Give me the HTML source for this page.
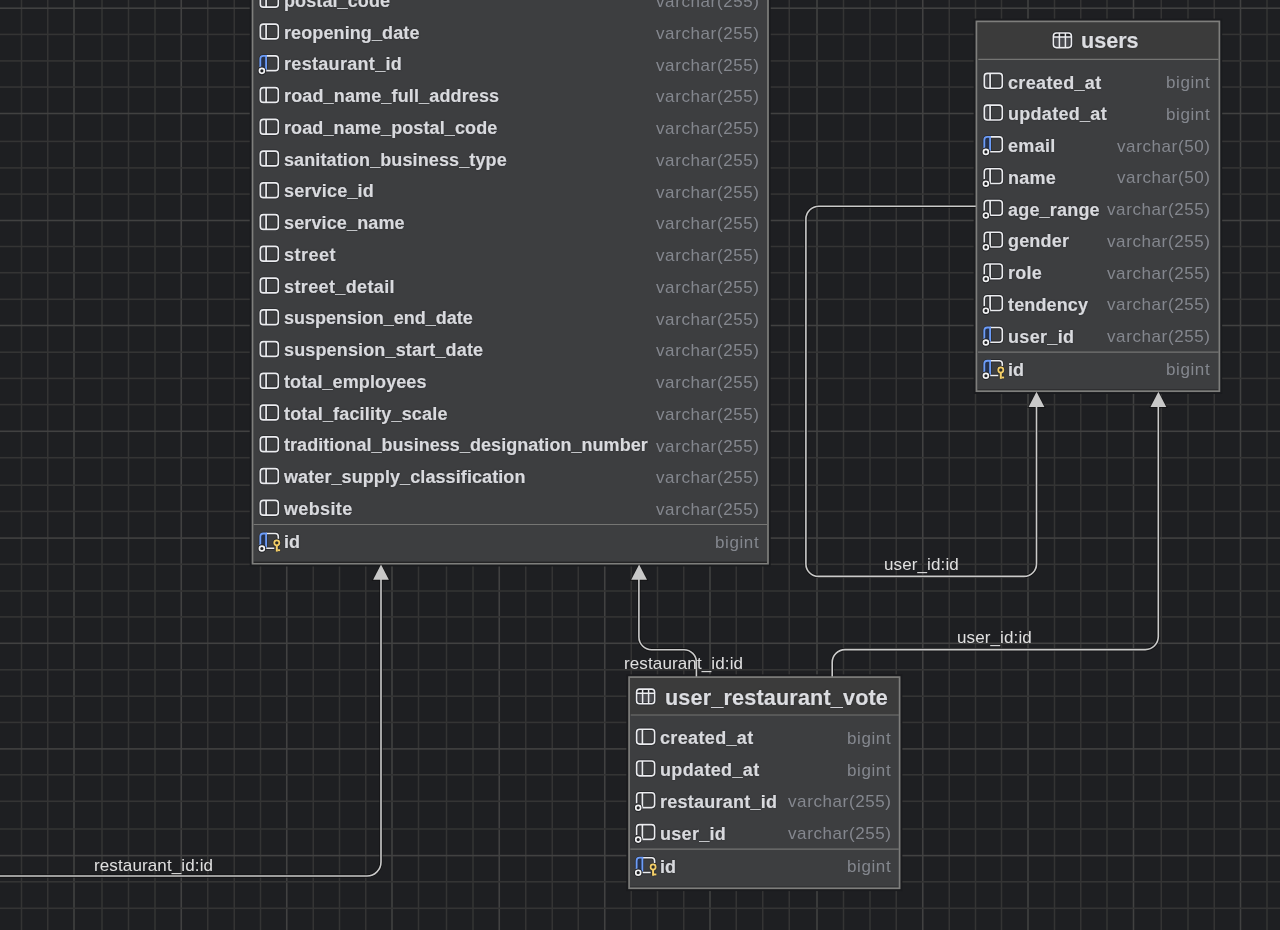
<!DOCTYPE html>
<html><head><meta charset="utf-8"><title>diagram</title>
<style>
html,body{margin:0;padding:0;background:#1e1f22;}
body{width:1280px;height:930px;overflow:hidden;position:relative;font-family:"Liberation Sans",sans-serif;}
svg{position:absolute;left:0;top:0;}
.tbl{position:absolute;box-sizing:border-box;background:#3d3e40;border:1.7px solid #777777;}
.hd{position:absolute;left:0;right:0;top:0;background:#3b3b3b;border-bottom:1.5px solid #6a6a6a;box-sizing:border-box;}
.sep{position:absolute;left:0;right:0;height:1.5px;background:#686868;}
.n,.t,.ti,.lb{will-change:transform;}
.n{position:absolute;font-weight:bold;font-size:18px;color:#d9dade;-webkit-text-stroke:0.2px #d9dade;text-shadow:0 0 1.5px rgba(18,18,20,0.75);white-space:nowrap;line-height:20px;letter-spacing:0.06px;}
.t{position:absolute;font-size:17px;color:#84878e;white-space:nowrap;line-height:20px;text-align:right;letter-spacing:0.6px;}
.ti{position:absolute;font-weight:bold;font-size:21.6px;color:#dcdde1;-webkit-text-stroke:0.2px #dcdde1;text-shadow:0 0 1.5px rgba(18,18,20,0.75);white-space:nowrap;line-height:24px;}
.lb{position:absolute;font-size:17px;color:#e0e0e0;white-space:nowrap;line-height:20px;letter-spacing:0.12px;}
</style></head><body>

<svg width="1280" height="930" viewBox="0 0 1280 930">
<rect x="20.70" y="0" width="1.6" height="930" fill="#343434"/>
<rect x="46.95" y="0" width="1.6" height="930" fill="#343434"/>
<rect x="73.20" y="0" width="1.6" height="930" fill="#414141"/>
<rect x="101.20" y="0" width="1.6" height="930" fill="#343434"/>
<rect x="127.70" y="0" width="1.6" height="930" fill="#343434"/>
<rect x="154.20" y="0" width="1.6" height="930" fill="#343434"/>
<rect x="180.45" y="0" width="1.6" height="930" fill="#414141"/>
<rect x="206.95" y="0" width="1.6" height="930" fill="#343434"/>
<rect x="233.45" y="0" width="1.6" height="930" fill="#343434"/>
<rect x="259.70" y="0" width="1.6" height="930" fill="#343434"/>
<rect x="285.95" y="0" width="1.6" height="930" fill="#414141"/>
<rect x="312.45" y="0" width="1.6" height="930" fill="#343434"/>
<rect x="338.70" y="0" width="1.6" height="930" fill="#343434"/>
<rect x="364.95" y="0" width="1.6" height="930" fill="#343434"/>
<rect x="391.20" y="0" width="1.6" height="930" fill="#414141"/>
<rect x="417.70" y="0" width="1.6" height="930" fill="#343434"/>
<rect x="445.70" y="0" width="1.6" height="930" fill="#343434"/>
<rect x="472.20" y="0" width="1.6" height="930" fill="#343434"/>
<rect x="498.45" y="0" width="1.6" height="930" fill="#414141"/>
<rect x="524.95" y="0" width="1.6" height="930" fill="#343434"/>
<rect x="551.45" y="0" width="1.6" height="930" fill="#343434"/>
<rect x="577.45" y="0" width="1.6" height="930" fill="#343434"/>
<rect x="603.95" y="0" width="1.6" height="930" fill="#414141"/>
<rect x="630.45" y="0" width="1.6" height="930" fill="#343434"/>
<rect x="656.70" y="0" width="1.6" height="930" fill="#343434"/>
<rect x="682.95" y="0" width="1.6" height="930" fill="#343434"/>
<rect x="709.20" y="0" width="1.6" height="930" fill="#414141"/>
<rect x="735.45" y="0" width="1.6" height="930" fill="#343434"/>
<rect x="761.95" y="0" width="1.6" height="930" fill="#343434"/>
<rect x="788.45" y="0" width="1.6" height="930" fill="#343434"/>
<rect x="816.20" y="0" width="1.6" height="930" fill="#414141"/>
<rect x="842.70" y="0" width="1.6" height="930" fill="#343434"/>
<rect x="869.20" y="0" width="1.6" height="930" fill="#343434"/>
<rect x="895.45" y="0" width="1.6" height="930" fill="#343434"/>
<rect x="921.95" y="0" width="1.6" height="930" fill="#414141"/>
<rect x="948.45" y="0" width="1.6" height="930" fill="#343434"/>
<rect x="974.70" y="0" width="1.6" height="930" fill="#343434"/>
<rect x="1000.70" y="0" width="1.6" height="930" fill="#343434"/>
<rect x="1027.20" y="0" width="1.6" height="930" fill="#414141"/>
<rect x="1053.70" y="0" width="1.6" height="930" fill="#343434"/>
<rect x="1079.95" y="0" width="1.6" height="930" fill="#343434"/>
<rect x="1106.20" y="0" width="1.6" height="930" fill="#343434"/>
<rect x="1132.70" y="0" width="1.6" height="930" fill="#414141"/>
<rect x="1160.45" y="0" width="1.6" height="930" fill="#343434"/>
<rect x="1187.20" y="0" width="1.6" height="930" fill="#343434"/>
<rect x="1213.45" y="0" width="1.6" height="930" fill="#343434"/>
<rect x="1239.70" y="0" width="1.6" height="930" fill="#414141"/>
<rect x="1266.20" y="0" width="1.6" height="930" fill="#343434"/>
<rect x="0" y="7.40" width="1280" height="1.6" fill="#414141"/>
<rect x="0" y="33.60" width="1280" height="1.6" fill="#343434"/>
<rect x="0" y="60.10" width="1280" height="1.6" fill="#343434"/>
<rect x="0" y="86.25" width="1280" height="1.6" fill="#343434"/>
<rect x="0" y="112.70" width="1280" height="1.6" fill="#414141"/>
<rect x="0" y="140.60" width="1280" height="1.6" fill="#343434"/>
<rect x="0" y="167.10" width="1280" height="1.6" fill="#343434"/>
<rect x="0" y="193.30" width="1280" height="1.6" fill="#343434"/>
<rect x="0" y="219.70" width="1280" height="1.6" fill="#414141"/>
<rect x="0" y="245.70" width="1280" height="1.6" fill="#343434"/>
<rect x="0" y="271.90" width="1280" height="1.6" fill="#343434"/>
<rect x="0" y="298.50" width="1280" height="1.6" fill="#343434"/>
<rect x="0" y="324.70" width="1280" height="1.6" fill="#414141"/>
<rect x="0" y="351.40" width="1280" height="1.6" fill="#343434"/>
<rect x="0" y="377.60" width="1280" height="1.6" fill="#343434"/>
<rect x="0" y="403.80" width="1280" height="1.6" fill="#343434"/>
<rect x="0" y="430.50" width="1280" height="1.6" fill="#414141"/>
<rect x="0" y="456.90" width="1280" height="1.6" fill="#343434"/>
<rect x="0" y="484.40" width="1280" height="1.6" fill="#343434"/>
<rect x="0" y="510.60" width="1280" height="1.6" fill="#343434"/>
<rect x="0" y="537.30" width="1280" height="1.6" fill="#414141"/>
<rect x="0" y="563.50" width="1280" height="1.6" fill="#343434"/>
<rect x="0" y="590.20" width="1280" height="1.6" fill="#343434"/>
<rect x="0" y="616.10" width="1280" height="1.6" fill="#343434"/>
<rect x="0" y="642.50" width="1280" height="1.6" fill="#414141"/>
<rect x="0" y="669.00" width="1280" height="1.6" fill="#343434"/>
<rect x="0" y="695.40" width="1280" height="1.6" fill="#343434"/>
<rect x="0" y="721.60" width="1280" height="1.6" fill="#343434"/>
<rect x="0" y="748.10" width="1280" height="1.6" fill="#414141"/>
<rect x="0" y="774.00" width="1280" height="1.6" fill="#343434"/>
<rect x="0" y="800.50" width="1280" height="1.6" fill="#343434"/>
<rect x="0" y="828.20" width="1280" height="1.6" fill="#343434"/>
<rect x="0" y="854.80" width="1280" height="1.6" fill="#414141"/>
<rect x="0" y="881.00" width="1280" height="1.6" fill="#343434"/>
<rect x="0" y="907.50" width="1280" height="1.6" fill="#343434"/>
<rect x="252.5" y="-10" width="515.5" height="573.7" fill="none" stroke="#1a1b1e" stroke-width="5.5"/><rect x="976.4" y="21.4" width="243.0" height="369.8" fill="none" stroke="#1a1b1e" stroke-width="5.5"/><rect x="629.1" y="677.1" width="270.5" height="211.2" fill="none" stroke="#1a1b1e" stroke-width="5.5"/>
</svg>

<svg width="0" height="0" style="position:absolute"><defs>
<g id="col">
 <rect x="-9" y="-7.4" width="18" height="14.8" rx="3" fill="none" stroke="#2a2b2e" stroke-width="3.4"/>
 <rect x="-9" y="-7.4" width="5.8" height="14.8" fill="#47484c"/>
 <path d="M-3.2 -7.4V7.4" stroke="#2a2b2e" stroke-width="3.2"/>
 <rect x="-9" y="-7.4" width="18" height="14.8" rx="3" fill="none" stroke="#ebecef" stroke-width="1.6"/>
 <path d="M-3.2 -7.4V7.4" stroke="#ebecef" stroke-width="1.7"/>
</g>
<g id="fkw">
 <path d="M-7 7.4H6A3 3 0 0 0 9 4.4V-4.4A3 3 0 0 0 6 -7.4H-6A3 3 0 0 0 -9 -4.4V3" fill="none" stroke="#2a2b2e" stroke-width="3.4"/>
 <path d="M-3.2 -7.4V7.4" stroke="#2a2b2e" stroke-width="3.2"/>
 <path d="M-5 7.4H6A3 3 0 0 0 9 4.4V-4.4A3 3 0 0 0 6 -7.4H-6A3 3 0 0 0 -9 -4.4V3" fill="none" stroke="#ebecef" stroke-width="1.6"/>
 <path d="M-3.2 -7.4V7.4" stroke="#ebecef" stroke-width="1.7"/>
 <circle cx="-7.4" cy="7.6" r="4.3" fill="#232427"/>
 <circle cx="-7.4" cy="7.6" r="2.45" fill="#1e1f22" stroke="#f2f2f3" stroke-width="1.7"/>
</g>
<g id="fkb">
 <path d="M-7 7.4H6A3 3 0 0 0 9 4.4V-4.4A3 3 0 0 0 6 -7.4H-6A3 3 0 0 0 -9 -4.4V3" fill="none" stroke="#2a2b2e" stroke-width="3.4"/>
 <path d="M-3.2 -7.4V7.4" stroke="#2a2b2e" stroke-width="3.2"/>
 <rect x="-9" y="-7" width="5.8" height="12" fill="#26324c"/>
 <path d="M-3.2 7.4H6A3 3 0 0 0 9 4.4V-4.4A3 3 0 0 0 6 -7.4H-3.2" fill="none" stroke="#ebecef" stroke-width="1.6"/>
 <path d="M-9 4V-4.4A3 3 0 0 1 -6 -7.4H-3.2V6.5" fill="none" stroke="#6c9cf8" stroke-width="1.8"/>
 <circle cx="-7.4" cy="7.6" r="4.3" fill="#232427"/>
 <circle cx="-7.4" cy="7.6" r="2.45" fill="#1e1f22" stroke="#f2f2f3" stroke-width="1.7"/>
</g>
<g id="pk">
 <path d="M-7 7.4H5M9 -1V-4.4A3 3 0 0 0 6 -7.4H-6A3 3 0 0 0 -9 -4.4V3" fill="none" stroke="#2a2b2e" stroke-width="3.4"/>
 <path d="M-3.2 -7.4V7.4" stroke="#2a2b2e" stroke-width="3.2"/>
 <rect x="-9" y="-7" width="5.8" height="12" fill="#26324c"/>
 <path d="M-3.2 7.4H5M9 -2V-4.4A3 3 0 0 0 6 -7.4H-3.2" fill="none" stroke="#ebecef" stroke-width="1.6"/>
 <path d="M-9 4V-4.4A3 3 0 0 1 -6 -7.4H-3.2V6.5" fill="none" stroke="#6c9cf8" stroke-width="1.8"/>
 <circle cx="-7.4" cy="7.6" r="4.3" fill="#232427"/>
 <circle cx="-7.4" cy="7.6" r="2.45" fill="#1e1f22" stroke="#f2f2f3" stroke-width="1.7"/>
 <g>
  <circle cx="7.5" cy="1.9" r="4.2" fill="#2a2b2e"/>
  <path d="M7.5 4V10.6M8 9.3H11" fill="none" stroke="#2a2b2e" stroke-width="3.8"/>
  <circle cx="7.5" cy="1.9" r="2.55" fill="#2d2c28" stroke="#f4cf68" stroke-width="1.75"/>
  <path d="M7.5 4.2V10.7" fill="none" stroke="#f4cf68" stroke-width="2"/>
  <rect x="8.3" y="8.4" width="2.5" height="1.9" fill="#f4cf68"/>
 </g>
</g>
<g id="tb">
 <rect x="-9" y="-7.3" width="18" height="14.6" rx="3" fill="#4a4b50" stroke="#2a2b2e" stroke-width="3.4"/>
 <rect x="-9" y="-7.3" width="18" height="4" fill="#1e1f22"/>
 <rect x="-9" y="-7.3" width="18" height="14.6" rx="3" fill="none" stroke="#ebecef" stroke-width="1.6"/>
 <path d="M-9 -3.2H9M-3 -7.3V7.3M3 -7.3V7.3" stroke="#ebecef" stroke-width="1.5" fill="none"/>
</g>
<g id="arr"><path d="M0 0L7.9 15.3H-7.9Z" fill="#c8c8c8"/></g>
</defs></svg>

<svg width="1280" height="930" viewBox="0 0 1280 930" fill="none">
<g stroke="#111113" stroke-opacity="0.8" stroke-width="3.4" fill="none">
<path d="M381 579V862A14 14 0 0 1 367 876H0"/>
<path d="M638.9 579V637A12.7 12.7 0 0 0 651.6 649.7H684A12.4 12.4 0 0 1 696.4 662.1V677"/>
<path d="M832.2 677V662.4A12.8 12.8 0 0 1 845 649.6H1145.3A13 13 0 0 0 1158.3 636.6V406"/>
<path d="M976 206.2H818.9A13 13 0 0 0 805.9 219.2V563.9A12.5 12.5 0 0 0 818.4 576.4H1024A12.5 12.5 0 0 0 1036.5 563.9V406"/>
</g>
<path d="M381 563.1999999999999L390.3 580.6999999999999H371.7Z" fill="#111113" fill-opacity="0.8"/>
<path d="M639.1 563.1999999999999L648.4 580.6999999999999H629.8000000000001Z" fill="#111113" fill-opacity="0.8"/>
<path d="M1036.5 390.5L1045.8 408.0H1027.2Z" fill="#111113" fill-opacity="0.8"/>
<path d="M1158.4 390.5L1167.7 408.0H1149.1000000000001Z" fill="#111113" fill-opacity="0.8"/>
<g stroke="#cacaca" stroke-width="1.6" fill="none">
<path d="M381 579V862A14 14 0 0 1 367 876H0"/>
<path d="M638.9 579V637A12.7 12.7 0 0 0 651.6 649.7H684A12.4 12.4 0 0 1 696.4 662.1V677"/>
<path d="M832.2 677V662.4A12.8 12.8 0 0 1 845 649.6H1145.3A13 13 0 0 0 1158.3 636.6V406"/>
<path d="M976 206.2H818.9A13 13 0 0 0 805.9 219.2V563.9A12.5 12.5 0 0 0 818.4 576.4H1024A12.5 12.5 0 0 0 1036.5 563.9V406"/>
</g>
<use href="#arr" x="381" y="564.4"/>
<use href="#arr" x="639.1" y="564.4"/>
<use href="#arr" x="1036.5" y="391.7"/>
<use href="#arr" x="1158.4" y="391.7"/>
</svg>

<div class="lb" style="left:94px;top:855.70px">restaurant_id:id</div>
<div class="lb" style="left:624px;top:654.00px">restaurant_id:id</div>
<div class="lb" style="left:957px;top:628.20px">user_id:id</div>
<div class="lb" style="left:884px;top:555.20px">user_id:id</div>
<svg width="1280" height="930" viewBox="0 0 1280 930"><rect x="252.5" y="-10" width="515.5" height="573.7" fill="#3d3e40"/><path d="M253.7 524.5H767.2" stroke="#757573" stroke-width="1.2"/><path d="M253.4 562.4H767.1" stroke="#151517" stroke-width="1.2"/><rect x="252.5" y="-10" width="515.5" height="573.7" fill="none" stroke="#7e7e7c" stroke-width="1.7"/></svg>
<div class="n" style="left:284px;top:-9.25px;letter-spacing:0.100px">postal_code</div>
<div class="t" style="right:520.10px;top:-7.80px">varchar(255)</div>
<div class="n" style="left:284px;top:22.50px;letter-spacing:0.107px">reopening_date</div>
<div class="t" style="right:520.10px;top:23.95px">varchar(255)</div>
<div class="n" style="left:284px;top:54.25px;letter-spacing:0.310px">restaurant_id</div>
<div class="t" style="right:520.10px;top:55.70px">varchar(255)</div>
<div class="n" style="left:284px;top:86.00px;letter-spacing:0.145px">road_name_full_address</div>
<div class="t" style="right:520.10px;top:87.45px">varchar(255)</div>
<div class="n" style="left:284px;top:117.75px;letter-spacing:0.110px">road_name_postal_code</div>
<div class="t" style="right:520.10px;top:119.20px">varchar(255)</div>
<div class="n" style="left:284px;top:149.50px;letter-spacing:0.112px">sanitation_business_type</div>
<div class="t" style="right:520.10px;top:150.95px">varchar(255)</div>
<div class="n" style="left:284px;top:181.25px;letter-spacing:0.194px">service_id</div>
<div class="t" style="right:520.10px;top:182.70px">varchar(255)</div>
<div class="n" style="left:284px;top:213.00px;letter-spacing:0.133px">service_name</div>
<div class="t" style="right:520.10px;top:214.45px">varchar(255)</div>
<div class="n" style="left:284px;top:244.75px;letter-spacing:0.480px">street</div>
<div class="t" style="right:520.10px;top:246.20px">varchar(255)</div>
<div class="n" style="left:284px;top:276.50px;letter-spacing:0.377px">street_detail</div>
<div class="t" style="right:520.10px;top:277.95px">varchar(255)</div>
<div class="n" style="left:284px;top:308.25px;letter-spacing:-0.018px">suspension_end_date</div>
<div class="t" style="right:520.10px;top:309.70px">varchar(255)</div>
<div class="n" style="left:284px;top:340.00px;letter-spacing:0.150px">suspension_start_date</div>
<div class="t" style="right:520.10px;top:341.45px">varchar(255)</div>
<div class="n" style="left:284px;top:371.75px;letter-spacing:0.103px">total_employees</div>
<div class="t" style="right:520.10px;top:373.20px">varchar(255)</div>
<div class="n" style="left:284px;top:403.50px;letter-spacing:0.176px">total_facility_scale</div>
<div class="t" style="right:520.10px;top:404.95px">varchar(255)</div>
<div class="n" style="left:284px;top:435.25px;letter-spacing:0.044px">traditional_business_designation_number</div>
<div class="t" style="right:520.10px;top:436.70px">varchar(255)</div>
<div class="n" style="left:284px;top:467.00px;letter-spacing:0.090px">water_supply_classification</div>
<div class="t" style="right:520.10px;top:468.45px">varchar(255)</div>
<div class="n" style="left:284px;top:498.75px;letter-spacing:0.360px">website</div>
<div class="t" style="right:520.10px;top:500.20px">varchar(255)</div>
<div class="n" style="left:284px;top:531.90px">id</div>
<div class="t" style="right:520.80px;top:533.35px">bigint</div>
<svg width="1280" height="930" viewBox="0 0 1280 930"><rect x="976.4" y="21.4" width="243.0" height="369.8" fill="#3d3e40"/><rect x="976.4" y="21.4" width="243.0" height="38.00" fill="#3b3b3b"/><path d="M978.3000000000001 59.4H1218.6000000000001" stroke="#757573" stroke-width="1.2"/><path d="M977.9000000000001 352.1H1218.6000000000001" stroke="#757573" stroke-width="1.2"/><path d="M977.6 389.9H1218.5" stroke="#2b2b2d" stroke-width="1.2"/><rect x="976.4" y="21.4" width="243.0" height="369.8" fill="none" stroke="#7e7e7c" stroke-width="1.7"/></svg>
<div class="ti" style="left:1081px;top:29.3px">users</div>
<div class="n" style="left:1008px;top:72.50px;letter-spacing:0.349px">created_at</div>
<div class="t" style="right:69.90px;top:73.05px">bigint</div>
<div class="n" style="left:1008px;top:104.26px;letter-spacing:0.293px">updated_at</div>
<div class="t" style="right:69.90px;top:104.81px">bigint</div>
<div class="n" style="left:1008px;top:136.02px;letter-spacing:0.334px">email</div>
<div class="t" style="right:69.20px;top:136.57px">varchar(50)</div>
<div class="n" style="left:1008px;top:167.78px;letter-spacing:0.260px">name</div>
<div class="t" style="right:69.20px;top:168.33px">varchar(50)</div>
<div class="n" style="left:1008px;top:199.54px;letter-spacing:0.198px">age_range</div>
<div class="t" style="right:69.20px;top:200.09px">varchar(255)</div>
<div class="n" style="left:1008px;top:231.30px;letter-spacing:0.180px">gender</div>
<div class="t" style="right:69.20px;top:231.85px">varchar(255)</div>
<div class="n" style="left:1008px;top:263.06px;letter-spacing:0.260px">role</div>
<div class="t" style="right:69.20px;top:263.61px">varchar(255)</div>
<div class="n" style="left:1008px;top:294.82px;letter-spacing:0.145px">tendency</div>
<div class="t" style="right:69.20px;top:295.37px">varchar(255)</div>
<div class="n" style="left:1008px;top:326.58px;letter-spacing:0.327px">user_id</div>
<div class="t" style="right:69.20px;top:327.13px">varchar(255)</div>
<div class="n" style="left:1008px;top:359.85px">id</div>
<div class="t" style="right:69.90px;top:360.40px">bigint</div>
<svg width="1280" height="930" viewBox="0 0 1280 930"><rect x="629.1" y="677.1" width="270.5" height="211.2" fill="#3d3e40"/><rect x="629.1" y="677.1" width="270.5" height="37.90" fill="#3b3b3b"/><path d="M630.7 715.0H898.8000000000001" stroke="#757573" stroke-width="1.2"/><path d="M630.3000000000001 849.2H898.8000000000001" stroke="#757573" stroke-width="1.2"/><path d="M630.0 887.0H898.7" stroke="#2b2b2d" stroke-width="1.2"/><rect x="629.1" y="677.1" width="270.5" height="211.2" fill="none" stroke="#7e7e7c" stroke-width="1.7"/></svg>
<div class="ti" style="left:664.5px;top:685.7px;letter-spacing:0.17px">user_restaurant_vote</div>
<div class="n" style="left:659.6px;top:728.30px;letter-spacing:0.349px">created_at</div>
<div class="t" style="right:389.00px;top:728.85px">bigint</div>
<div class="n" style="left:659.6px;top:760.06px;letter-spacing:0.349px">updated_at</div>
<div class="t" style="right:389.00px;top:760.61px">bigint</div>
<div class="n" style="left:659.6px;top:791.82px;letter-spacing:0.244px">restaurant_id</div>
<div class="t" style="right:388.10px;top:792.37px">varchar(255)</div>
<div class="n" style="left:659.6px;top:823.58px;letter-spacing:0.293px">user_id</div>
<div class="t" style="right:388.10px;top:824.13px">varchar(255)</div>
<div class="n" style="left:659.6px;top:856.70px">id</div>
<div class="t" style="right:389.00px;top:857.25px">bigint</div>
<svg width="1280" height="930" viewBox="0 0 1280 930">
<use href="#col" x="269.30" y="-0.25"/>
<use href="#col" x="269.30" y="31.50"/>
<use href="#fkb" x="269.30" y="63.25"/>
<use href="#col" x="269.30" y="95.00"/>
<use href="#col" x="269.30" y="126.75"/>
<use href="#col" x="269.30" y="158.50"/>
<use href="#col" x="269.30" y="190.25"/>
<use href="#col" x="269.30" y="222.00"/>
<use href="#col" x="269.30" y="253.75"/>
<use href="#col" x="269.30" y="285.50"/>
<use href="#col" x="269.30" y="317.25"/>
<use href="#col" x="269.30" y="349.00"/>
<use href="#col" x="269.30" y="380.75"/>
<use href="#col" x="269.30" y="412.50"/>
<use href="#col" x="269.30" y="444.25"/>
<use href="#col" x="269.30" y="476.00"/>
<use href="#col" x="269.30" y="507.75"/>
<use href="#pk" x="269.30" y="540.90"/>
<use href="#tb" x="1062.40" y="40.30"/>
<use href="#col" x="993.30" y="80.80"/>
<use href="#col" x="993.30" y="112.56"/>
<use href="#fkb" x="993.30" y="144.32"/>
<use href="#fkw" x="993.30" y="176.08"/>
<use href="#fkw" x="993.30" y="207.84"/>
<use href="#fkw" x="993.30" y="239.60"/>
<use href="#fkw" x="993.30" y="271.36"/>
<use href="#fkw" x="993.30" y="303.12"/>
<use href="#fkb" x="993.30" y="334.88"/>
<use href="#pk" x="993.30" y="368.15"/>
<use href="#tb" x="645.60" y="696.40"/>
<use href="#col" x="645.60" y="736.70"/>
<use href="#col" x="645.60" y="768.46"/>
<use href="#fkw" x="645.60" y="800.22"/>
<use href="#fkw" x="645.60" y="831.98"/>
<use href="#pk" x="645.60" y="865.10"/>
</svg>
</body></html>
